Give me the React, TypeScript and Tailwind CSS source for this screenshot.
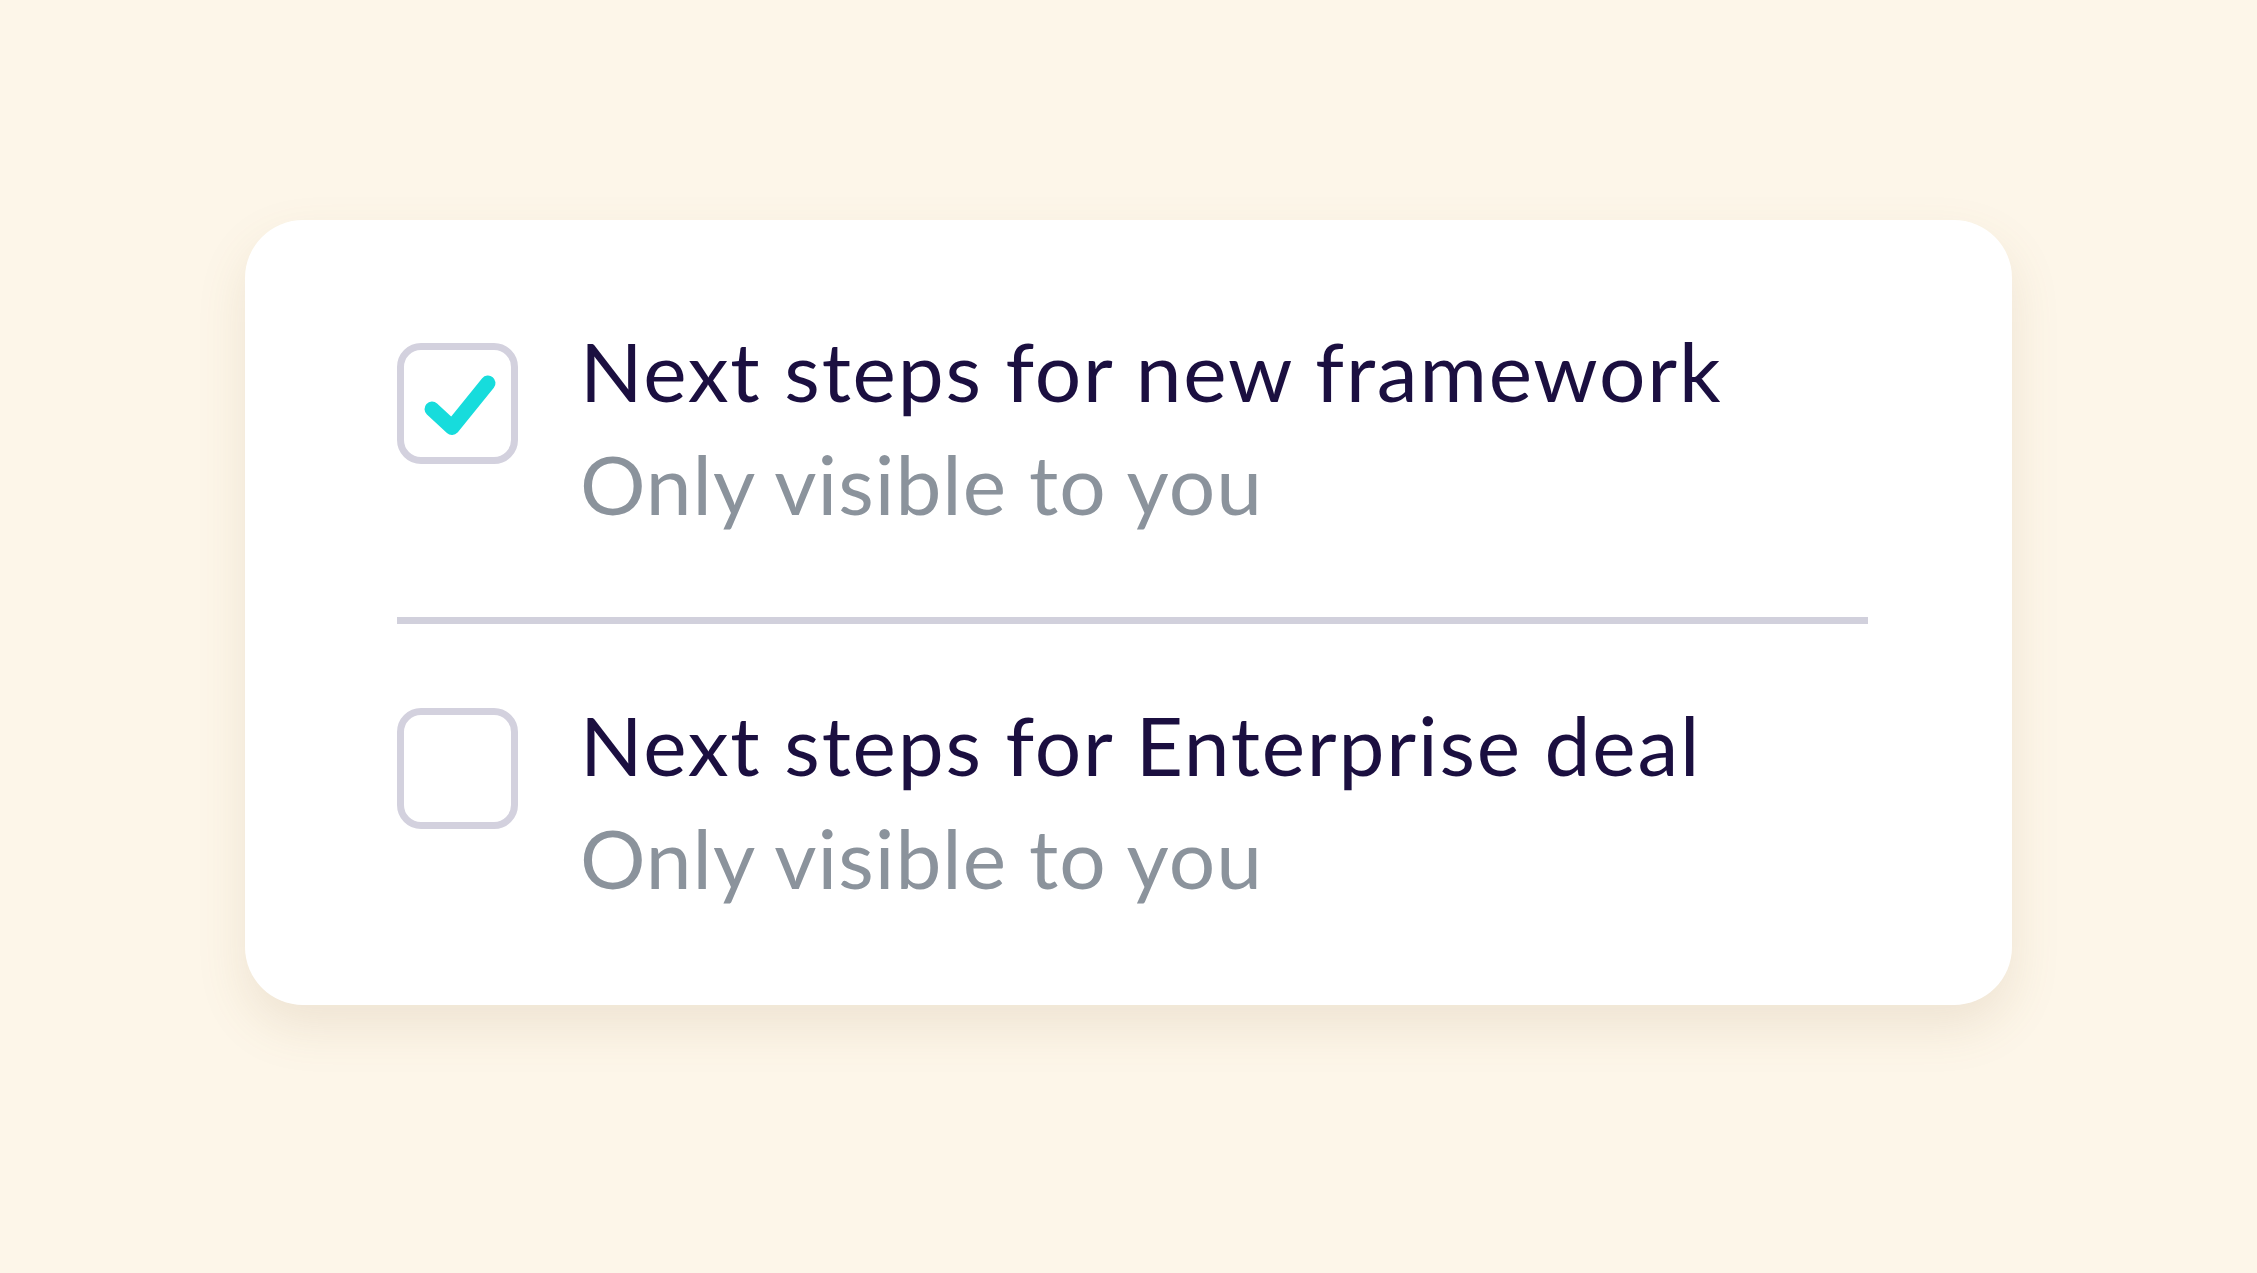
import React from "react";

function CheckBox({ checked }: { checked: boolean }) {
  return (
    <div className="w-[121px] h-[121px] shrink-0 rounded-[24px] border-[7px] border-[#d3d1de] bg-white">
      {checked && (
        <svg width="107" height="107" viewBox="0 0 107 107" fill="none">
          <path
            d="M28 59 L48 77.5 L84 33"
            stroke="#17dcdc"
            strokeWidth="15"
            strokeLinecap="round"
            strokeLinejoin="round"
          />
        </svg>
      )}
    </div>
  );
}

function Row({ title, checked, boxOffset }: { title: string; checked: boolean; boxOffset: string }) {
  return (
    <div className="flex items-start gap-[62px]">
      <div className={boxOffset}>
        <CheckBox checked={checked} />
      </div>
      <div className="flex flex-col" style={{ fontFamily: "Lato, 'Noto Sans', sans-serif" }}>
        <div className="text-[82px] leading-[113px] tracking-[1.8px] text-[#1b0f40] whitespace-nowrap">{title}</div>
        <div className="text-[82px] leading-[113px] tracking-[1px] text-[#8b939c] whitespace-nowrap">Only visible to you</div>
      </div>
    </div>
  );
}

export default function App() {
  return (
    <div className="min-h-screen w-full bg-[#fdf6e9] pt-[220px] pl-[245px]">
      <div className="w-[1767px] h-[785px] rounded-[58px] bg-white shadow-[0_22px_50px_rgba(140,110,60,0.13)] pt-[94px] pl-[152px] pr-[144px]">
        <Row title="Next steps for new framework" checked={true} boxOffset="mt-[29px]" />
        <div className="mt-[77px] h-[7px] w-full bg-[#d1d0dc]" />
        <div className="mt-[64px]">
          <Row title="Next steps for Enterprise deal" checked={false} boxOffset="mt-[20px]" />
        </div>
      </div>
    </div>
  );
}
